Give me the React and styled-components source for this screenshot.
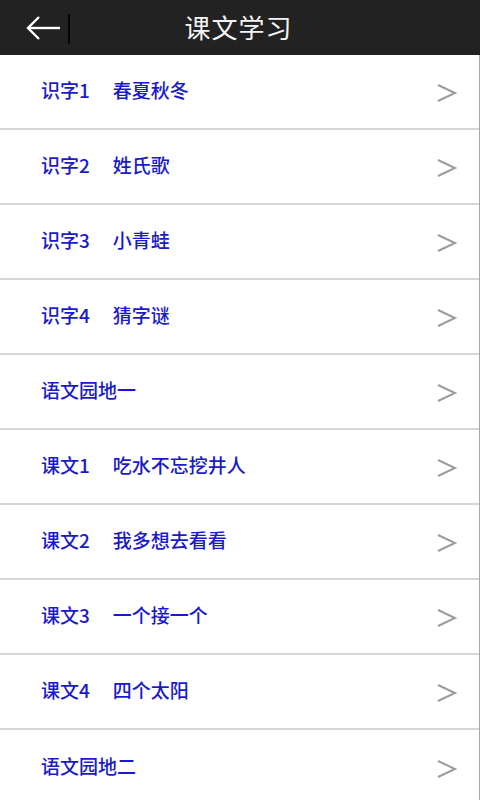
import React from "react";
import styled, { createGlobalStyle } from "styled-components";

const GlobalStyle = createGlobalStyle`
	html, body {
		margin: 0;
		padding: 0;
		background: #ffffff;
	}
	body {
		font-family: "Noto Sans CJK SC", "Noto Sans", sans-serif;
	}
`;

const Page = styled.div`
	width: 480px;
	height: 800px;
	overflow: hidden;
	display: flex;
	flex-direction: column;
	background: #ffffff;
`;

const TopBar = styled.header`
	height: 55px;
	flex-shrink: 0;
	background: #222222;
	display: grid;
	grid-template-columns: 80px 1fr 80px;
	align-items: center;
`;

const BackButton = styled.div`
	display: flex;
	align-items: center;
	height: 100%;
	padding-left: 26px;
	gap: 6px;
`;

const Separator = styled.span`
	width: 2px;
	height: 30px;
	background: #050505;
	margin-top: 2px;
`;

const Title = styled.h1`
	margin: 0;
	text-align: center;
	color: #f4f4f4;
	font-size: 26px;
	font-weight: 400;
	letter-spacing: 1px;
	line-height: 1;
	padding-bottom: 1px;
	padding-right: 3px;
`;

const List = styled.ul`
	list-style: none;
	margin: 0;
	padding: 0;
	flex: 1;
	border-right: 1px solid #a8a8a8;
`;

const Row = styled.li`
	height: 75px;
	box-sizing: border-box;
	border-bottom: 2px solid #d6d6d6;
	display: flex;
	align-items: center;
	padding: 0 21px 1px 41px;
	&:last-child {
		border-bottom: none;
	}
`;

const Label = styled.div`
	flex: 1;
	display: flex;
	gap: 23px;
	color: #1a1ac8;
	font-size: 19px;
	font-weight: 500;
	line-height: 1;
	padding-bottom: 4px;
`;

const Arrow = () => (
	<svg width="22" height="22" viewBox="0 0 22 22" style={{ marginTop: 4 }}>
		<polyline
			points="2,3 19,11 2,19"
			fill="none"
			stroke="#9c9c9c"
			strokeWidth="2"
		/>
	</svg>
);

const BackArrow = () => (
	<svg width="36" height="26" viewBox="0 0 36 26">
		<polyline
			points="13,2 2,13 13,24"
			fill="none"
			stroke="#ffffff"
			strokeWidth="2.4"
		/>
		<line x1="2" y1="13" x2="34" y2="13" stroke="#ffffff" strokeWidth="2.4" />
	</svg>
);

const lessons = [
	["识字1", "春夏秋冬"],
	["识字2", "姓氏歌"],
	["识字3", "小青蛙"],
	["识字4", "猜字谜"],
	["语文园地一"],
	["课文1", "吃水不忘挖井人"],
	["课文2", "我多想去看看"],
	["课文3", "一个接一个"],
	["课文4", "四个太阳"],
	["语文园地二"],
];

const App = () => {
	return (
		<Page>
			<GlobalStyle />
			<TopBar>
				<BackButton>
					<BackArrow />
					<Separator />
				</BackButton>
				<Title>课文学习</Title>
				<div />
			</TopBar>
			<List>
				{lessons.map((item) => (
					<Row key={item.join("")}>
						<Label>
							{item.map((t) => (
								<span key={t}>{t}</span>
							))}
						</Label>
						<Arrow />
					</Row>
				))}
			</List>
		</Page>
	);
};

export default App;
